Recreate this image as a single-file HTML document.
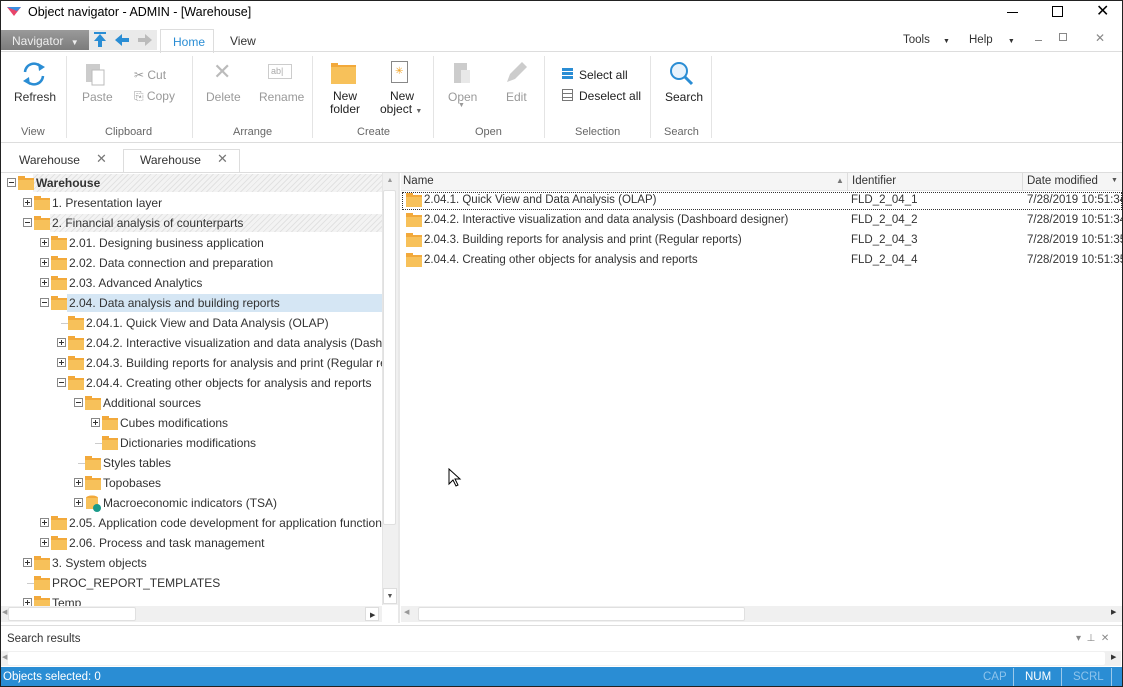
<!DOCTYPE html>
<html><head><meta charset="utf-8"><style>
*{box-sizing:border-box;margin:0;padding:0}
body{width:1123px;height:687px;position:relative;overflow:hidden;font-family:"Liberation Sans",sans-serif;font-size:12px;color:#333;background:#fff}
.a{position:absolute;white-space:nowrap}
.f{position:absolute;width:16px;height:12px;background:#f7c15a;border-top:2px solid #f2a93b}
.f:before{content:"";position:absolute;left:0;top:-4px;width:7px;height:3px;background:#f2a93b}
.ex{position:absolute;width:9px;height:9px;border:1px solid #888;background:#fff}
.ex:after{content:"";position:absolute;left:1px;top:3px;width:5px;height:1px;background:#333}
.ex.p:before{content:"";position:absolute;left:3px;top:1px;width:1px;height:5px;background:#333}
.g{color:#999}
.grp{position:absolute;top:126px;font-size:11px;color:#666}
.sep{position:absolute;top:56px;width:1px;height:82px;background:#e4e4e4}
</style></head><body>
<div class="a" style="left:0;top:0;width:1123px;height:687px;border:1px solid #222;z-index:9;pointer-events:none"></div>
<!-- title -->
<svg class="a" style="left:7px;top:7px" width="14" height="10"><polygon points="0,0 14,0 7,9" fill="#e8446a"/><polygon points="0,0 14,0 10,4" fill="#3a8ee0"/></svg>
<div class="a" style="left:28px;top:5px;font-size:12.5px;color:#000">Object navigator - ADMIN - [Warehouse]</div>
<div class="a" style="left:1007px;top:12px;width:11px;height:1px;background:#000"></div>
<div class="a" style="left:1052px;top:6px;width:11px;height:11px;border:1px solid #000"></div>
<div class="a" style="left:1096px;top:1px;font-size:16px;color:#000">✕</div>
<!-- nav row -->
<div class="a" style="left:1px;top:30px;width:88px;height:20px;background:linear-gradient(#9a9a9a,#7c7c7c);color:#eee;padding:4px 0 0 11px">Navigator <span style="font-size:8px;margin-left:4px">▼</span></div>
<div class="a" style="left:89px;top:30px;width:68px;height:20px;background:#eaeaea"></div>
<svg class="a" style="left:93px;top:31px" width="64" height="18"><rect x="1" y="1" width="12" height="2" fill="#2a8dd4"/><polygon points="7,3 1,10 5,10 5,16 9,16 9,10 13,10" fill="#2a8dd4"/><polygon points="22,9 29,3 29,7 36,7 36,11 29,11 29,15" fill="#2a8dd4"/><polygon points="59,9 52,3 52,7 45,7 45,11 52,11 52,15" fill="#bbb"/></svg>
<div class="a" style="left:160px;top:29px;width:54px;height:24px;border:1px solid #ddd;border-bottom:none;background:#fff;color:#2a8dd4;padding:5px 0 0 12px">Home</div>
<div class="a" style="left:230px;top:34px">View</div>
<div class="a" style="left:903px;top:34px;font-size:11.5px">Tools <span style="font-size:7px;margin-left:10px">▼</span></div>
<div class="a" style="left:969px;top:34px;font-size:11.5px">Help <span style="font-size:7px;margin-left:12px">▼</span></div>
<div class="a" style="left:1035px;top:40px;width:7px;height:1px;background:#888"></div>
<div class="a" style="left:1059px;top:33px;width:8px;height:8px;border:1px solid #888"></div>
<div class="a" style="left:1095px;top:31px;color:#888;font-size:12px">✕</div>
<div class="a" style="left:0;top:51px;width:1123px;height:1px;background:#ddd"></div>
<!-- ribbon -->
<svg class="a" style="left:20px;top:60px" width="28" height="28"><path d="M5 12a9 9 0 0 1 16-5M23 16a9 9 0 0 1-16 5" stroke="#2a8dd4" stroke-width="2.5" fill="none"/><polygon points="18,3 25,7 19,11" fill="#2a8dd4"/><polygon points="10,25 3,21 9,17" fill="#2a8dd4"/></svg>
<div class="a" style="left:14px;top:90px">Refresh</div>
<div class="grp" style="left:21px">View</div>
<div class="sep" style="left:66px"></div>
<svg class="a" style="left:84px;top:62px" width="22" height="24"><rect x="2" y="2" width="14" height="18" fill="#ccc"/><rect x="8" y="8" width="12" height="15" fill="#fff" stroke="#bbb"/></svg>
<div class="a g" style="left:82px;top:90px">Paste</div>
<div class="a g" style="left:134px;top:68px">✂ Cut</div>
<div class="a g" style="left:134px;top:89px">⎘ Copy</div>
<div class="grp" style="left:105px">Clipboard</div>
<div class="sep" style="left:192px"></div>
<div class="a" style="left:213px;top:59px;font-size:22px;color:#bbb">✕</div>
<div class="a g" style="left:206px;top:90px">Delete</div>
<div class="a" style="left:268px;top:64px;width:24px;height:15px;border:1px solid #ccc;font-size:9px;color:#aaa;padding:1px 2px">ab|</div>
<div class="a g" style="left:259px;top:90px">Rename</div>
<div class="grp" style="left:233px">Arrange</div>
<div class="sep" style="left:312px"></div>
<div class="f" style="left:331px;top:65px;width:25px;height:19px"></div>
<div class="a" style="left:330px;top:90px;color:#222;text-align:center;line-height:13px">New<br>folder</div>
<div class="a" style="left:391px;top:61px;width:17px;height:22px;border:1px solid #888;background:#fff;color:#f0a020;font-size:10px;padding:4px 0 0 3px">✳</div>
<div class="a" style="left:380px;top:90px;color:#222;line-height:13px">&nbsp;&nbsp;&nbsp;New<br>object <span style="font-size:7px;color:#666">▼</span></div>
<div class="grp" style="left:357px">Create</div>
<div class="sep" style="left:433px"></div>
<svg class="a" style="left:452px;top:61px" width="22" height="25"><rect x="2" y="2" width="13" height="20" fill="#ccc"/><rect x="9" y="9" width="9" height="13" fill="#e8e8e8"/></svg>
<div class="a g" style="left:448px;top:90px">Open</div>
<div class="a g" style="left:458px;top:102px;font-size:7px">▼</div>
<svg class="a" style="left:503px;top:60px" width="26" height="26"><path d="M4 22l3-8 12-12 5 5-12 12z" fill="#ccc"/></svg>
<div class="a g" style="left:506px;top:90px">Edit</div>
<div class="grp" style="left:475px">Open</div>
<div class="sep" style="left:544px"></div>
<div class="a" style="left:562px;top:68px;width:11px;height:12px;background:repeating-linear-gradient(#2a8dd4 0 3px,#fff 3px 4px)"></div>
<div class="a" style="left:579px;top:68px;color:#222">Select all</div>
<div class="a" style="left:562px;top:89px;width:11px;height:12px;border:1px solid #777;background:repeating-linear-gradient(#fff 0 3px,#777 3px 4px)"></div>
<div class="a" style="left:579px;top:89px;color:#222">Deselect all</div>
<div class="grp" style="left:575px">Selection</div>
<div class="sep" style="left:650px"></div>
<svg class="a" style="left:667px;top:60px" width="28" height="28"><circle cx="12" cy="11" r="8" stroke="#2a8dd4" stroke-width="2" fill="#e8f3fc"/><line x1="18" y1="17" x2="25" y2="24" stroke="#2a8dd4" stroke-width="3"/></svg>
<div class="a" style="left:665px;top:90px;color:#222">Search</div>
<div class="grp" style="left:664px">Search</div>
<div class="sep" style="left:711px"></div>
<div class="a" style="left:0;top:142px;width:1123px;height:1px;background:#ddd"></div>
<!-- doc tabs -->
<div class="a" style="left:19px;top:153px">Warehouse</div>
<div class="a" style="left:96px;top:151px;color:#777;font-size:13px">✕</div>
<div class="a" style="left:123px;top:149px;width:117px;height:24px;border:1px solid #ddd;border-bottom:none;background:#fff"></div>
<div class="a" style="left:140px;top:153px">Warehouse</div>
<div class="a" style="left:217px;top:151px;color:#777;font-size:13px">✕</div>
<div class="a" style="left:0;top:172px;width:1123px;height:1px;background:#ddd"></div>
<!-- tree panel -->
<div class="a" style="left:33px;top:174px;width:349px;height:18px;background:repeating-linear-gradient(135deg,#f3f3f3 0 3px,#e2e2e2 3px 4px)"></div>
<div class="a" style="left:50px;top:214px;width:332px;height:18px;background:repeating-linear-gradient(135deg,#f3f3f3 0 3px,#e2e2e2 3px 4px)"></div>
<div class="a" style="left:67px;top:294px;width:315px;height:18px;background:#d5e6f4"></div>
<div class="a" style="left:0;top:0;width:382px;height:606px;overflow:hidden"><div id="tree"></div></div>
<div class="a" style="left:382px;top:173px;width:16px;height:432px;background:#f0f0f0;border-left:1px solid #e5e5e5"></div>
<div class="a" style="left:383px;top:174px;width:14px;height:15px;color:#999;font-size:7px;text-align:center;padding-top:3px">▲</div>
<div class="a" style="left:383px;top:190px;width:13px;height:335px;background:#fff;border:1px solid #e0e0e0;border-radius:2px"></div>
<div class="a" style="left:383px;top:588px;width:14px;height:16px;background:#fff;border:1px solid #ddd;color:#555;font-size:7px;text-align:center;padding-top:4px">▼</div>
<div class="a" style="left:398px;top:173px;width:2px;height:450px;background:#e8e8e8"></div>
<!-- h scrollbars -->
<div class="a" style="left:0;top:606px;width:382px;height:16px;background:#f0f0f0"></div>
<div class="a" style="left:2px;top:608px;color:#999;font-size:7px">◀</div>
<div class="a" style="left:8px;top:607px;width:128px;height:14px;background:#fff;border:1px solid #e0e0e0;border-radius:2px"></div>
<div class="a" style="left:365px;top:607px;width:14px;height:14px;background:#fff;border:1px solid #ddd;font-size:7px;padding:3px 0 0 4px">▶</div>
<div class="a" style="left:401px;top:606px;width:721px;height:16px;background:#f0f0f0"></div>
<div class="a" style="left:404px;top:608px;color:#999;font-size:7px">◀</div>
<div class="a" style="left:418px;top:607px;width:327px;height:14px;background:#fff;border:1px solid #e0e0e0;border-radius:2px"></div>
<div class="a" style="left:1111px;top:608px;font-size:7px">▶</div>
<!-- list header -->
<div class="a" style="left:401px;top:173px;width:721px;height:18px;background:#f5f5f5;border-bottom:1px solid #e5e5e5"></div>
<div class="a" style="left:403px;top:175px;font-size:11.5px">Name</div>
<div class="a" style="left:836px;top:176px;font-size:8px;color:#777">▲</div>
<div class="a" style="left:847px;top:173px;width:1px;height:18px;background:#ddd"></div>
<div class="a" style="left:852px;top:175px;font-size:11.5px">Identifier</div>
<div class="a" style="left:1022px;top:173px;width:1px;height:18px;background:#ddd"></div>
<div class="a" style="left:1027px;top:175px;font-size:11.5px">Date modified</div>
<div class="a" style="left:1111px;top:177px;font-size:7px;color:#555">▼</div>
<div class="a" style="left:402px;top:192px;width:720px;height:18px;border:1px dotted #333"></div>
<div id="list"></div>
<!-- cursor -->
<svg class="a" style="left:448px;top:468px" width="14" height="20"><path d="M1 1v15l4-4 3 6 2-1-3-6h5z" fill="#fff" stroke="#000"/></svg>
<!-- search results -->
<div class="a" style="left:0;top:625px;width:1123px;height:1px;background:#ddd"></div>
<div class="a" style="left:7px;top:633px;font-size:11.5px">Search results</div>
<div class="a" style="left:1076px;top:633px;color:#888;font-size:10px">▾ &nbsp;⊥ &nbsp;✕</div>
<div class="a" style="left:1px;top:651px;width:1120px;height:15px;background:#f0f0f0"></div>
<div class="a" style="left:8px;top:652px;width:1097px;height:13px;background:#fff;border-radius:2px"></div>
<div class="a" style="left:2px;top:653px;color:#999;font-size:7px">◀</div>
<div class="a" style="left:1111px;top:653px;font-size:7px">▶</div>
<!-- status -->
<div class="a" style="left:0;top:667px;width:1123px;height:20px;background:#2a8dd4;color:#fff;padding:4px 0 0 3px;font-size:11.5px">Objects selected: 0</div>
<div class="a" style="left:983px;top:671px;color:#8ec4ec;font-size:11.5px">CAP</div>
<div class="a" style="left:1013px;top:668px;width:1px;height:18px;background:#9cc9ea"></div>
<div class="a" style="left:1025px;top:671px;color:#fff;font-size:11.5px">NUM</div>
<div class="a" style="left:1061px;top:668px;width:1px;height:18px;background:#9cc9ea"></div>
<div class="a" style="left:1073px;top:671px;color:#8ec4ec;font-size:11.5px">SCRL</div>
<div class="a" style="left:1111px;top:668px;width:1px;height:18px;background:#9cc9ea"></div>
<script>
var T=[[0,'Warehouse','m',1],[1,'1. Presentation layer','p'],[1,'2. Financial analysis of counterparts','m'],[2,'2.01. Designing business application','p'],[2,'2.02. Data connection and preparation','p'],[2,'2.03. Advanced Analytics','p'],[2,'2.04. Data analysis and building reports','m'],[3,'2.04.1. Quick View and Data Analysis (OLAP)',''],[3,'2.04.2. Interactive visualization and data analysis (Dashboard designer)','p'],[3,'2.04.3. Building reports for analysis and print (Regular reports)','p'],[3,'2.04.4. Creating other objects for analysis and reports','m'],[4,'Additional sources','m'],[5,'Cubes modifications','p'],[5,'Dictionaries modifications',''],[4,'Styles tables',''],[4,'Topobases','p'],[4,'Macroeconomic indicators (TSA)','p',0,1],[2,'2.05. Application code development for application functioning','p'],[2,'2.06. Process and task management','p'],[1,'3. System objects','p'],[1,'PROC_REPORT_TEMPLATES',''],[1,'Temp','p']];
var ex=[7,23,40,57,74,91],h='';
T.forEach(function(r,i){var y=183+20*i,x=ex[r[0]];
if(r[2])h+='<div class="ex '+(r[2]=='p'?'p':'')+'" style="left:'+x+'px;top:'+(y-5)+'px"></div>';
else h+='<div class="a" style="left:'+(x+4)+'px;top:'+y+'px;width:8px;height:1px;background:#ccc"></div>';
if(r[4])h+='<svg class="a" style="left:'+(x+11)+'px;top:'+(y-8)+'px" width="16" height="17"><ellipse cx="7" cy="3" rx="6" ry="2.5" fill="#f2a93b"/><rect x="1" y="3" width="12" height="11" fill="#f7c15a"/><circle cx="12" cy="13" r="4" fill="#1a9a8a"/></svg>';
else h+='<div class="f" style="left:'+(x+11)+'px;top:'+(y-5)+'px"></div>';
h+='<div class="a" style="left:'+(x+29)+'px;top:'+(y-7)+'px;'+(r[3]?'font-weight:bold;':'')+'width:'+(382-x-29)+'px;overflow:hidden">'+r[1]+'</div>';});
document.getElementById('tree').innerHTML=h;
var L=[['2.04.1. Quick View and Data Analysis (OLAP)','1','34'],['2.04.2. Interactive visualization and data analysis (Dashboard designer)','2','34'],['2.04.3. Building reports for analysis and print (Regular reports)','3','35'],['2.04.4. Creating other objects for analysis and reports','4','35']];
h='';L.forEach(function(r,i){var y=201+20*i;
h+='<div class="f" style="left:406px;top:'+(y-6)+'px"></div><div class="a" style="left:424px;top:'+(y-7)+'px;font-size:11.5px">'+r[0]+'</div><div class="a" style="left:851px;top:'+(y-7)+'px;font-size:11.5px">FLD_2_04_'+r[1]+'</div><div class="a" style="left:1027px;top:'+(y-7)+'px;font-size:11.5px;width:95px;overflow:hidden">7/28/2019 10:51:'+r[2]+'</div>';});
document.getElementById('list').innerHTML=h;
</script>
</body></html>
